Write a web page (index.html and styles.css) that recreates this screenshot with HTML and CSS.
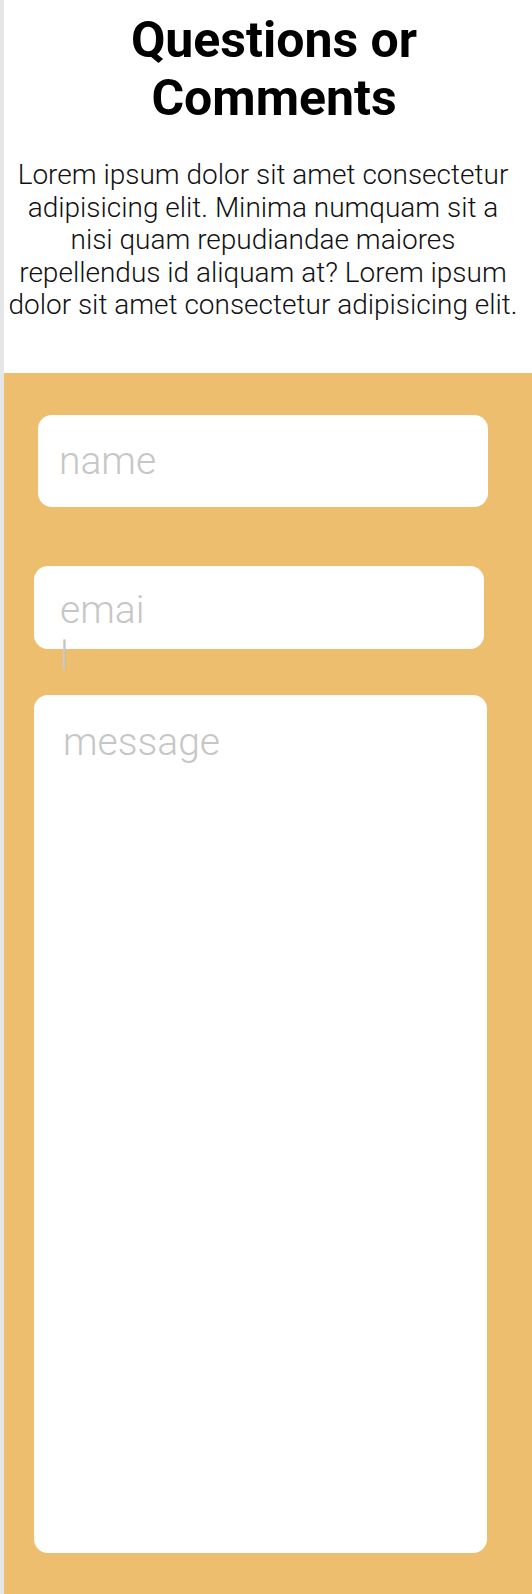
FILE: index.html
```html
<!DOCTYPE html>
<html lang="en">
<head>
<meta charset="utf-8">
<title>Questions or Comments</title>
<link rel="stylesheet" href="styles.css">
</head>
<body>
<div class="page">
  <section class="intro">
    <h1 class="title">Questions or Comments</h1>
    <p class="lead">Lorem ipsum dolor sit amet consectetur adipisicing elit. Minima numquam sit a nisi quam repudiandae maiores repellendus id aliquam at? Lorem ipsum dolor sit amet consectetur adipisicing elit.</p>
  </section>
  <form class="contact">
    <div class="field field-name"><span class="ph">name</span></div>
    <div class="field field-email"><span class="ph">emai<br>l</span></div>
    <div class="field field-message"><span class="ph">message</span></div>
  </form>
</div>
</body>
</html>
```
FILE: styles.css
```css
html, body {
  margin: 0;
  padding: 0;
}
body {
  background: #e6e6e6;
  font-family: Roboto, "Liberation Sans", sans-serif;
}
.page {
  margin-left: 4px;
  background: #ffffff;
  min-height: 1594px;
  display: flex;
  flex-direction: column;
}
.intro {
  padding: 11px 0 51px;
}
.title {
  margin: 0;
  padding-left: 12px;
  font-size: 50px;
  line-height: 58px;
  font-weight: 700;
  text-align: center;
  color: #000;
}
.lead {
  margin: 32px 10px 0 0;
  font-size: 28px;
  line-height: 32.5px;
  font-weight: 300;
  text-align: center;
  color: #111;
}
.contact {
  flex: 1;
  background: #ecbe6d;
  padding: 42px 0 41px;
  display: flex;
  flex-direction: column;
}
.field {
  background: #ffffff;
  border-radius: 14px;
  box-sizing: border-box;
  font-size: 39px;
  font-weight: 300;
  color: #c6c6c6;
}
.ph {
  display: block;
}
.field-name {
  margin-left: 34px;
  width: 450px;
  height: 92px;
  padding-left: 21px;
  display: flex;
  align-items: center;
}
.field-email {
  margin-top: 59px;
  margin-left: 30px;
  width: 450px;
  height: 83px;
  padding: 21px 0 0 26px;
  line-height: 46px;
}
.field-message {
  margin-top: 46px;
  margin-left: 30px;
  width: 453px;
  height: 858px;
  padding: 24px 0 0 29px;
}
```
